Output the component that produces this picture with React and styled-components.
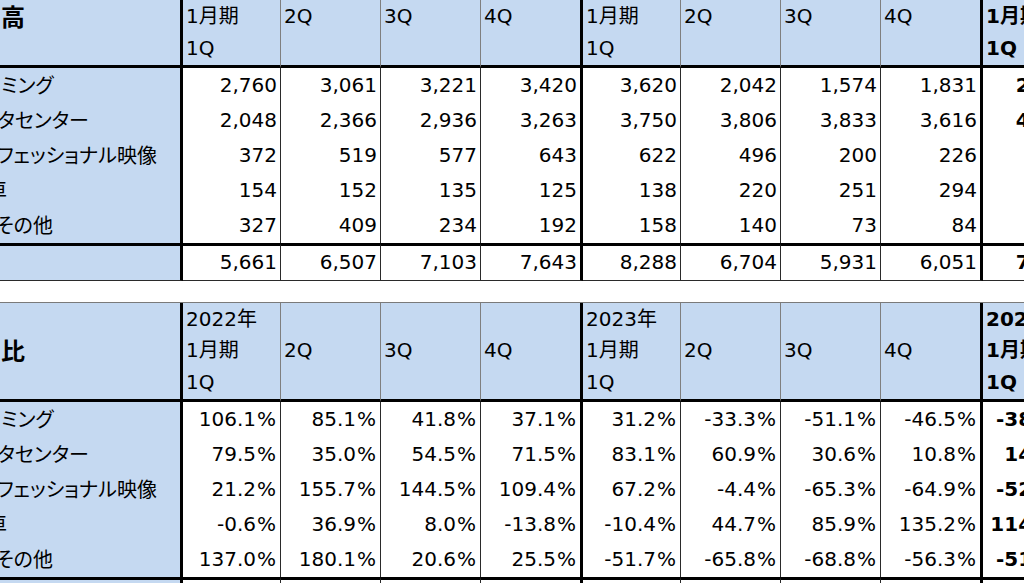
import React from "react";
import styled, { createGlobalStyle } from "styled-components";

const GlobalStyle = createGlobalStyle`
  html, body { margin: 0; padding: 0; background: #ffffff; }
  body { font-family: "DejaVu Sans", "Noto Sans CJK JP", sans-serif; color: #000; }
`;

const BLUE = "#C5D9F1";
const GRID = "240px 98px 100px 100px 102px 98px 100px 100px 102px 100px";

const Viewport = styled.div`
  width: 1024px;
  height: 583px;
  overflow: hidden;
  background: #fff;
`;

const Sheet = styled.div`
  margin-left: -57px;
  margin-top: -32px;
  width: max-content;
  display: flex;
  flex-direction: column;
  gap: 21px;
`;

const Table = styled.div`
  display: grid;
  grid-template-columns: ${GRID};
  grid-template-rows: 99px repeat(5, 35px) 38px;
  border-top: 1px solid #7a7a7a;
  font-size: 20px;
`;

const vBorder = (p) =>
  p.$thick ? "3px solid #000" : p.$head ? "1px solid #7f7f7f" : "1px solid #2a2a2a";

const Cell = styled.div`
  box-sizing: border-box;
  display: flex;
  align-items: center;
  overflow: hidden;
  white-space: nowrap;
  border-right: ${vBorder};
  border-bottom: ${(p) => (p.$head ? "3px solid #000" : p.$total ? "1px solid #2a2a2a" : "none")};
  border-top: ${(p) => (p.$total ? "3px solid #000" : "none")};
  font-weight: ${(p) => (p.$bold ? 700 : 400)};
`;

const TitleCell = styled(Cell)`
  background: ${BLUE};
  font-size: 24px;
  font-weight: 700;
  letter-spacing: 2px;
  padding-left: 6px;
  padding-bottom: 3px;
`;

const LabelCell = styled(Cell)`
  background: ${BLUE};
  padding-left: ${(p) => p.$indent}px;
  padding-bottom: 3px;
  font-feature-settings: "palt";
`;

const HeadCell = styled(Cell)`
  background: ${BLUE};
  flex-direction: column;
  align-items: flex-start;
  justify-content: center;
  padding-left: 3px;
`;

const HeadLine = styled.span`
  display: block;
  line-height: 31.5px;
  height: 31.5px;
`;

const ValueCell = styled(Cell)`
  background: #fff;
  justify-content: flex-end;
  padding-right: 3px;
  padding-bottom: 2px;
`;

const Pct = styled.span`
  display: inline-block;
  width: ${(p) => (p.$bold ? "1.27em" : "1.05em")};
  text-align: center;
`;

const COLS = [
  { top: "2022年", mid: "1月期", q: "1Q" },
  { q: "2Q" },
  { q: "3Q" },
  { q: "4Q", thick: true },
  { top: "2023年", mid: "1月期", q: "1Q" },
  { q: "2Q" },
  { q: "3Q" },
  { q: "4Q", thick: true },
  { top: "2024年", mid: "1月期", q: "1Q", bold: true },
];

const LABELS = [
  { text: "ゲーミング", indent: 19 },
  { text: "データセンター", indent: 16 },
  { text: "プロフェッショナル映像", indent: 16 },
  { text: "自動車", indent: 4 },
  { text: "OEMその他", indent: 7 },
];

const SALES = [
  ["2,760", "3,061", "3,221", "3,420", "3,620", "2,042", "1,574", "1,831", "2,240"],
  ["2,048", "2,366", "2,936", "3,263", "3,750", "3,806", "3,833", "3,616", "4,284"],
  ["372", "519", "577", "643", "622", "496", "200", "226", "295"],
  ["154", "152", "135", "125", "138", "220", "251", "294", "296"],
  ["327", "409", "234", "192", "158", "140", "73", "84", "77"],
];
const SALES_TOTAL = ["5,661", "6,507", "7,103", "7,643", "8,288", "6,704", "5,931", "6,051", "7,192"];

const YOY = [
  ["106.1%", "85.1%", "41.8%", "37.1%", "31.2%", "-33.3%", "-51.1%", "-46.5%", "-38.1%"],
  ["79.5%", "35.0%", "54.5%", "71.5%", "83.1%", "60.9%", "30.6%", "10.8%", "14.2%"],
  ["21.2%", "155.7%", "144.5%", "109.4%", "67.2%", "-4.4%", "-65.3%", "-64.9%", "-52.6%"],
  ["-0.6%", "36.9%", "8.0%", "-13.8%", "-10.4%", "44.7%", "85.9%", "135.2%", "114.5%"],
  ["137.0%", "180.1%", "20.6%", "25.5%", "-51.7%", "-65.8%", "-68.8%", "-56.3%", "-51.3%"],
];
const YOY_TOTAL = ["83.8%", "68.2%", "50.3%", "52.8%", "46.4%", "3.0%", "-16.5%", "-20.8%", "-13.2%"];

function Value({ v, bold }) {
  if (v.endsWith("%")) {
    return (
      <>
        {v.slice(0, -1)}
        <Pct $bold={bold}>%</Pct>
      </>
    );
  }
  return v;
}

function QuarterTable({ title, rows, total }) {
  return (
    <Table>
      <TitleCell $head $thick>{title}</TitleCell>
      {COLS.map((c, i) => (
        <HeadCell key={`h${i}`} $head $thick={c.thick} $bold={c.bold}>
          {c.top && <HeadLine>{c.top}</HeadLine>}
          {c.mid && <HeadLine>{c.mid}</HeadLine>}
          <HeadLine>{c.q}</HeadLine>
        </HeadCell>
      ))}
      {rows.map((r, ri) => (
        <React.Fragment key={`r${ri}`}>
          <LabelCell $thick $indent={LABELS[ri].indent}>{LABELS[ri].text}</LabelCell>
          {r.map((v, ci) => (
            <ValueCell key={ci} $thick={COLS[ci].thick} $bold={COLS[ci].bold}>
              <Value v={v} bold={COLS[ci].bold} />
            </ValueCell>
          ))}
        </React.Fragment>
      ))}
      <LabelCell $thick $total $indent={18} />
      {total.map((v, ci) => (
        <ValueCell key={`t${ci}`} $total $thick={COLS[ci].thick} $bold={COLS[ci].bold}>
          <Value v={v} bold={COLS[ci].bold} />
        </ValueCell>
      ))}
    </Table>
  );
}

export default function App() {
  return (
    <>
      <GlobalStyle />
      <Viewport>
        <Sheet>
          <QuarterTable title="売上高" rows={SALES} total={SALES_TOTAL} />
          <QuarterTable title="前年比" rows={YOY} total={YOY_TOTAL} />
        </Sheet>
      </Viewport>
    </>
  );
}
